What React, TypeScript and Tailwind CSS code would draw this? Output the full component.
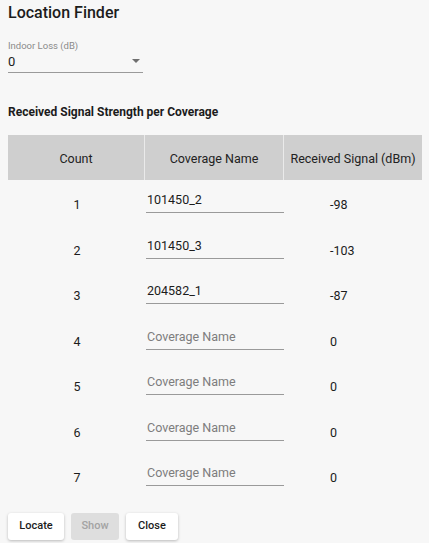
import React from "react";

const rows = [
  { n: 1, name: "101450_2", sig: "-98" },
  { n: 2, name: "101450_3", sig: "-103" },
  { n: 3, name: "204582_1", sig: "-87" },
  { n: 4, name: "", sig: "0" },
  { n: 5, name: "", sig: "0" },
  { n: 6, name: "", sig: "0" },
  { n: 7, name: "", sig: "0" },
];

export default function App() {
  return (
    <div
      className="w-[429px] h-[543px] bg-[#f7f7f7] text-[#1c1c1c] overflow-hidden"
      style={{ fontFamily: "Roboto, 'Liberation Sans', sans-serif" }}
    >
      <div className="pl-2 pt-[3px]">
        <div className="text-[16px] font-medium leading-[20px]">Location Finder</div>
        <div className="mt-[17px] w-[135px]">
          <div className="text-[9.5px] text-[#8a8a8a] leading-[12px]">Indoor Loss (dB)</div>
          <div className="relative h-[21px] border-b border-[#9a9a9a] flex items-center">
            <span className="text-[13px] leading-[16px]">0</span>
            <svg className="absolute right-[3px] top-[7px]" width="8" height="4" viewBox="0 0 8 4">
              <path d="M0 0 L8 0 L4 4 Z" fill="#6f6f6f" />
            </svg>
          </div>
        </div>
        <div className="mt-[31px] text-[12px] font-bold leading-[16px]">
          Received Signal Strength per Coverage
        </div>
        <div className="mt-[15px] w-[414px]">
          <div className="flex h-[45px] bg-[#cfcfcf] text-[12.5px] text-[#222]">
            <div className="w-[137px] flex items-center justify-center pt-[4px] border-r border-[#eaeaea]">Count</div>
            <div className="w-[139px] flex items-center justify-center pt-[4px] border-r border-[#eaeaea]">Coverage Name</div>
            <div className="flex-1 flex items-center justify-center pt-[4px]">Received Signal (dBm)</div>
          </div>
          {rows.map((r) => (
            <div key={r.n} className="flex h-[45.5px] items-start text-[12.5px] leading-[16px]">
              <div className="w-[138px] text-center pt-[17px]">{r.n}</div>
              <div className="w-[138px] h-[26px] mt-[7px] flex items-end pb-[4px] border-b border-[#9a9a9a] pl-[1px]">
                {r.name ? (
                  <span>{r.name}</span>
                ) : (
                  <span className="text-[#7d7d7d]">Coverage Name</span>
                )}
              </div>
              <div className="pl-[46px] pt-[17px]">{r.sig}</div>
            </div>
          ))}
        </div>
        <div className="mt-[14px] flex gap-[7px] text-[11px] font-medium">
          <div className="w-[56px] h-[27px] flex items-center justify-center bg-white rounded-[3px] shadow-[0_1px_3px_rgba(0,0,0,0.25)]">
            Locate
          </div>
          <div className="w-[48px] h-[27px] flex items-center justify-center bg-[#dedede] text-[#a3a3a3] rounded-[3px]">
            Show
          </div>
          <div className="w-[52px] h-[27px] flex items-center justify-center bg-white rounded-[3px] shadow-[0_1px_3px_rgba(0,0,0,0.25)]">
            Close
          </div>
        </div>
      </div>
    </div>
  );
}
